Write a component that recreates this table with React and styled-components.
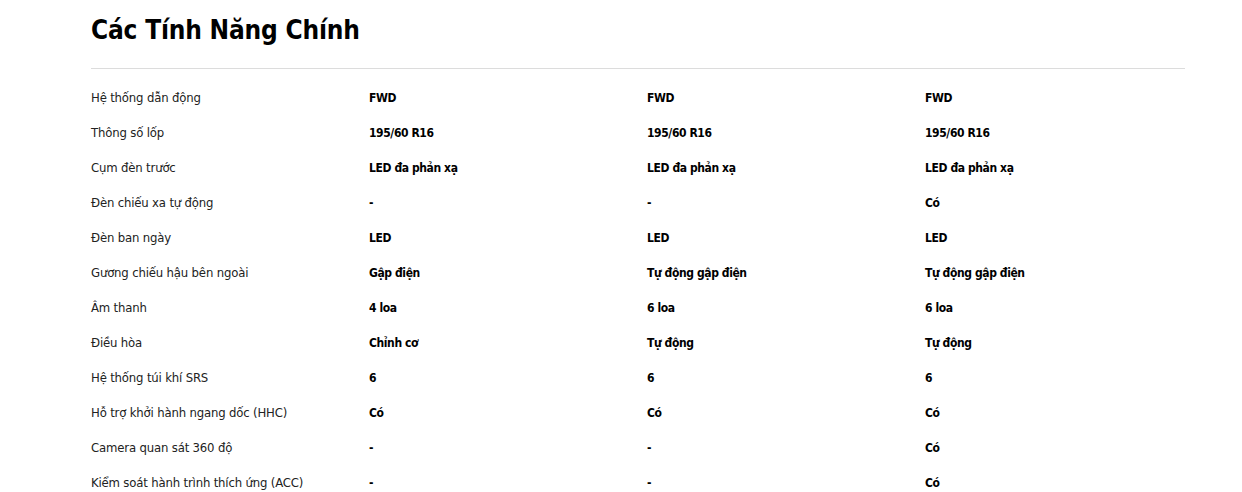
import React from "react";
import styled, { createGlobalStyle } from "styled-components";

const GlobalStyle = createGlobalStyle`
  html, body {
    margin: 0;
    padding: 0;
    background: #fff;
  }
  body {
    font-family: "DejaVu Sans Condensed", "DejaVu Sans", sans-serif;
    color: #111;
  }
`;

const rows = [
  ["Hệ thống dẫn động", "FWD", "FWD", "FWD"],
  ["Thông số lốp", "195/60 R16", "195/60 R16", "195/60 R16"],
  ["Cụm đèn trước", "LED đa phản xạ", "LED đa phản xạ", "LED đa phản xạ"],
  ["Đèn chiếu xa tự động", "-", "-", "Có"],
  ["Đèn ban ngày", "LED", "LED", "LED"],
  ["Gương chiếu hậu bên ngoài", "Gập điện", "Tự động gập điện", "Tự động gập điện"],
  ["Âm thanh", "4 loa", "6 loa", "6 loa"],
  ["Điều hòa", "Chỉnh cơ", "Tự động", "Tự động"],
  ["Hệ thống túi khí SRS", "6", "6", "6"],
  ["Hỗ trợ khởi hành ngang dốc (HHC)", "Có", "Có", "Có"],
  ["Camera quan sát 360 độ", "-", "-", "Có"],
  ["Kiểm soát hành trình thích ứng (ACC)", "-", "-", "Có"],
];

const Section = styled.section`
  padding: 12px 57px 0 91px;
`;

const Title = styled.h2`
  margin: 0;
  font-size: 26px;
  font-weight: 700;
  line-height: 36px;
  letter-spacing: -0.2px;
  color: #000;
`;

const Divider = styled.hr`
  margin: 20px 0 11px;
  border: 0;
  border-top: 1px solid #dcdcdc;
`;

const Table = styled.div`
  display: grid;
  grid-template-columns: repeat(4, 278px);
`;

const Cell = styled.div`
  height: 35px;
  display: flex;
  align-items: center;
  white-space: nowrap;
`;

const Label = styled(Cell)`
  font-size: 13px;
  letter-spacing: -0.17px;
  color: #222;
`;

const Value = styled(Cell)`
  font-size: 12px;
  font-weight: 700;
  letter-spacing: -0.4px;
  color: #000;
`;

export default function App() {
  return (
    <>
      <GlobalStyle />
      <Section>
        <Title>Các Tính Năng Chính</Title>
        <Divider />
        <Table>
          {rows.map((r) => (
            <React.Fragment key={r[0]}>
              <Label>{r[0]}</Label>
              {r.slice(1).map((v, i) => (
                <Value key={i}>{v}</Value>
              ))}
            </React.Fragment>
          ))}
        </Table>
      </Section>
    </>
  );
}
